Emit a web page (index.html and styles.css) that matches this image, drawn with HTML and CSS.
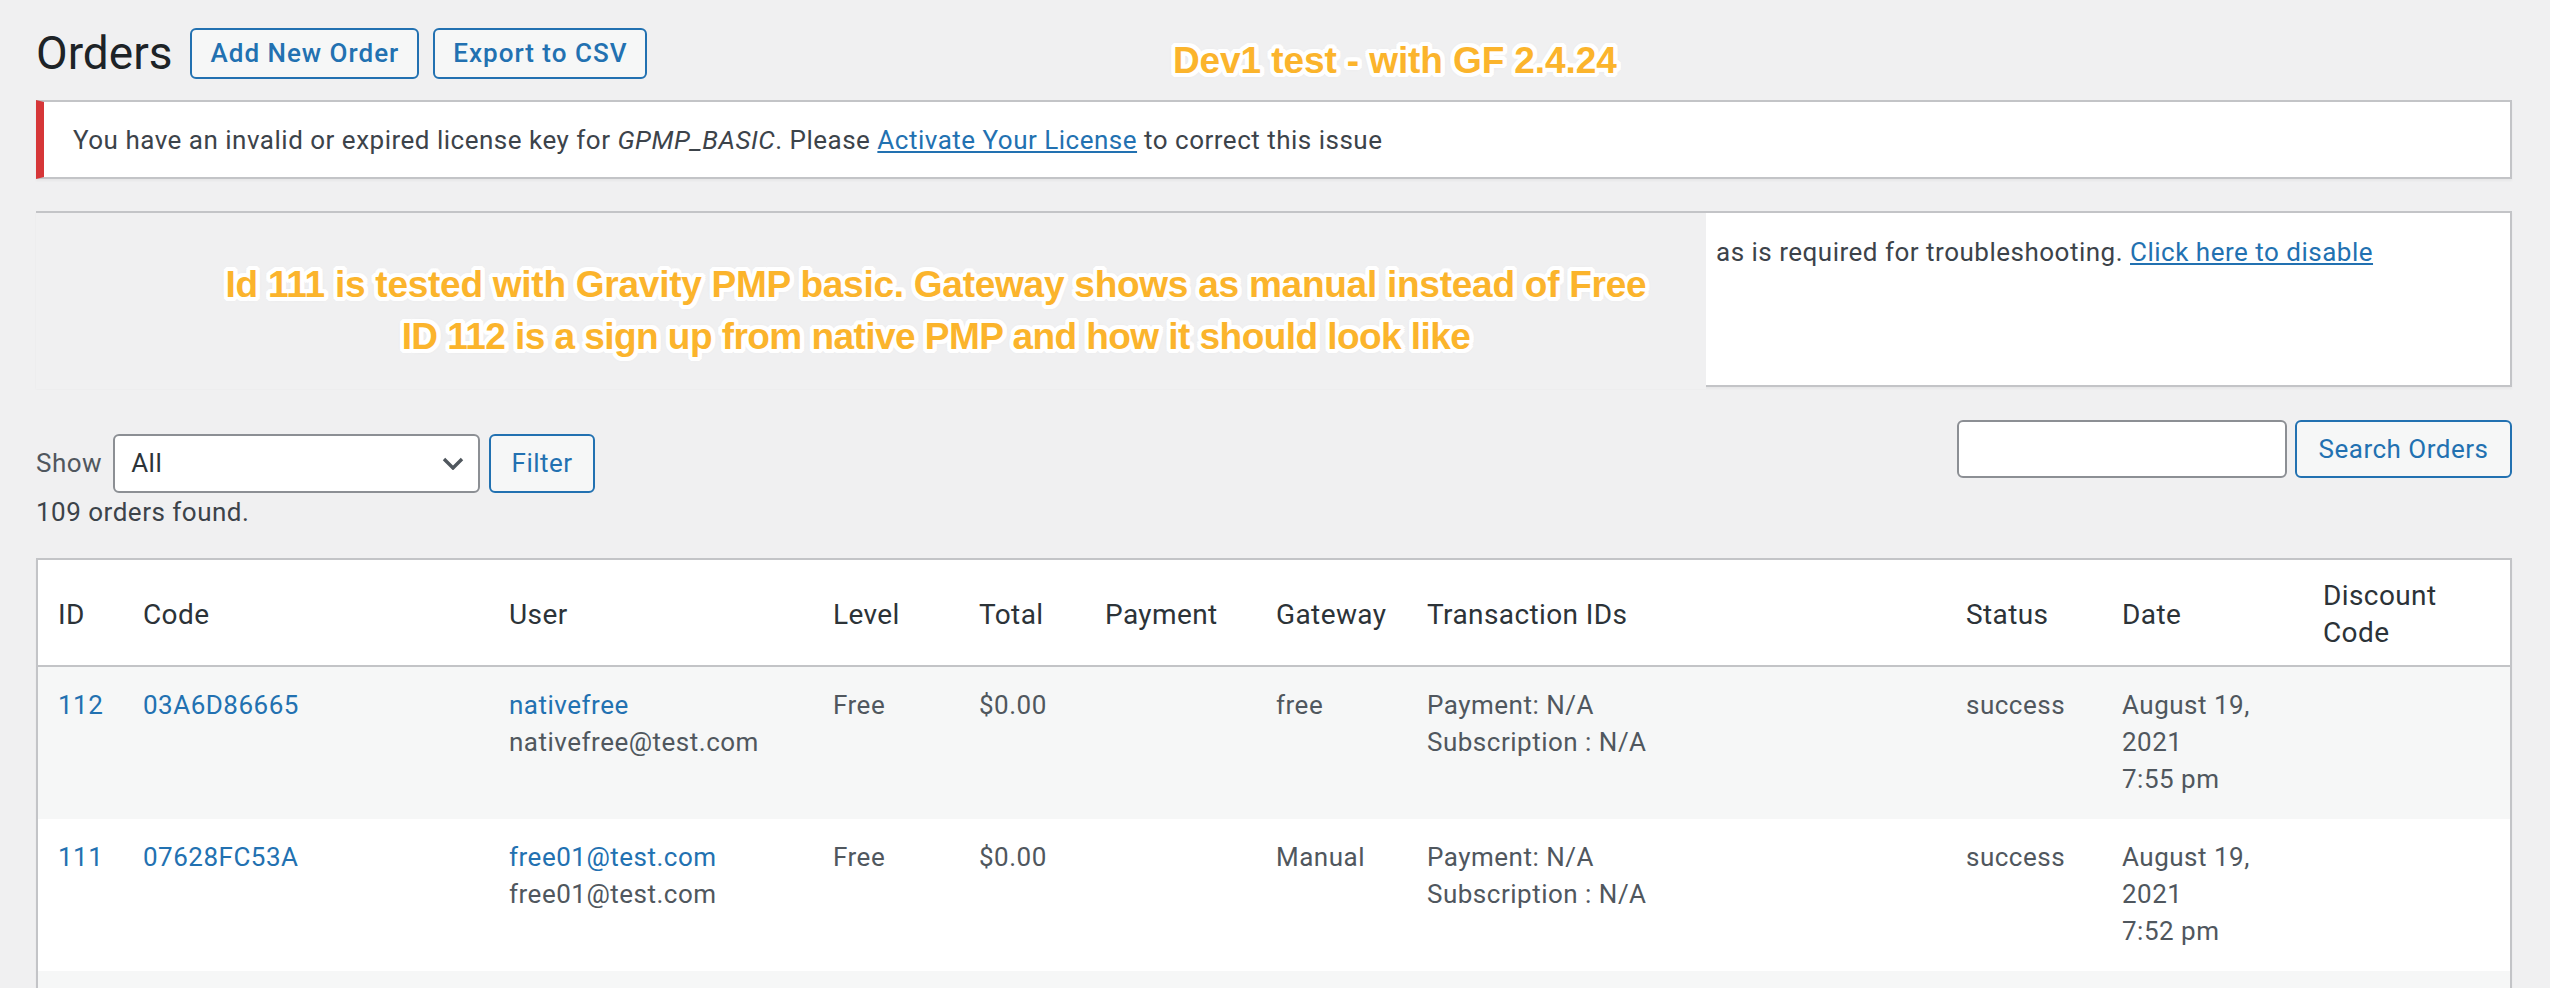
FILE: index.html
```html
<!DOCTYPE html>
<html lang="en">
<head>
<meta charset="utf-8">
<title>Orders</title>
<link rel="stylesheet" href="styles.css">
</head>
<body>
<div class="wrap">
  <div class="page-head">
    <h1 class="title">Orders</h1>
    <a class="title-btn" href="#">Add New Order</a>
    <a class="title-btn" href="#">Export to CSV</a>
    <p class="annot annot-dev">Dev1 test - with GF 2.4.24</p>
  </div>

  <div class="notice notice-error">
    <p>You have an invalid or expired license key for <em>GPMP_BASIC</em>. Please <a href="#">Activate Your License</a> to correct this issue</p>
  </div>

  <div class="notice notice-log">
    <p class="log-text">as is required for troubleshooting. <a href="#">Click here to disable</a></p>
    <div class="annot-patch">
      <p class="annot annot-l1">Id 111 is tested with Gravity PMP basic. Gateway shows as manual instead of Free</p>
      <p class="annot annot-l2">ID 112 is a sign up from native PMP and how it should look like</p>
    </div>
  </div>

  <div class="tablenav">
    <div class="filter">
      <div class="filter-row">
        <span class="show-label">Show</span>
        <div class="select">
          <span>All</span>
          <svg class="chev" width="22" height="13" viewBox="0 0 22 13"><path d="M2 2 L11 11 L20 2" fill="none" stroke="#50575e" stroke-width="3.4"/></svg>
        </div>
        <button class="btn btn-filter" type="button">Filter</button>
      </div>
      <p class="count">109 orders found.</p>
    </div>
    <div class="search">
      <div class="search-input"></div>
      <button class="btn btn-search" type="button">Search Orders</button>
    </div>
  </div>

  <table class="orders">
    <colgroup>
      <col class="c-id"><col class="c-code"><col class="c-user"><col class="c-level"><col class="c-total"><col class="c-pay"><col class="c-gw"><col class="c-tx"><col class="c-status"><col class="c-date"><col class="c-disc">
    </colgroup>
    <thead>
      <tr>
        <th>ID</th><th>Code</th><th>User</th><th>Level</th><th>Total</th><th>Payment</th><th>Gateway</th><th>Transaction IDs</th><th>Status</th><th>Date</th><th>Discount Code</th>
      </tr>
    </thead>
    <tbody>
      <tr>
        <td><a href="#">112</a></td>
        <td><a href="#">03A6D86665</a></td>
        <td><a href="#">nativefree</a><br>nativefree@test.com</td>
        <td>Free</td>
        <td>$0.00</td>
        <td></td>
        <td>free</td>
        <td>Payment: N/A<br>Subscription : N/A</td>
        <td>success</td>
        <td>August 19,<br>2021<br>7:55 pm</td>
        <td></td>
      </tr>
      <tr>
        <td><a href="#">111</a></td>
        <td><a href="#">07628FC53A</a></td>
        <td><a href="#">free01@test.com</a><br>free01@test.com</td>
        <td>Free</td>
        <td>$0.00</td>
        <td></td>
        <td>Manual</td>
        <td>Payment: N/A<br>Subscription : N/A</td>
        <td>success</td>
        <td>August 19,<br>2021<br>7:52 pm</td>
        <td></td>
      </tr>
      <tr class="row-empty">
        <td></td><td></td><td></td><td></td><td></td><td></td><td></td><td></td><td></td><td></td><td></td>
      </tr>
    </tbody>
  </table>
</div>
</body>
</html>
```
FILE: styles.css
```css
html, body {
  margin: 0;
  background: #f0f0f1;
}
body {
  font-family: Roboto, "Noto Sans", sans-serif;
  font-size: 26px;
  line-height: 37px;
  letter-spacing: 0.5px;
  color: #3c434a;
}
a {
  color: #2271b1;
  text-decoration: none;
}
.wrap {
  padding: 0 38px 0 36px;
}

/* header */
.page-head {
  position: relative;
  display: flex;
  align-items: center;
  padding-top: 28px;
}
.title {
  margin: 0 18px 0 0;
  font-size: 46px;
  font-weight: 400;
  line-height: 51px;
  letter-spacing: 0;
  color: #1d2327;
}
.title-btn {
  display: inline-flex;
  align-items: center;
  box-sizing: border-box;
  height: 51px;
  padding: 0 18px;
  margin-right: 14px;
  border: 2px solid #2271b1;
  border-radius: 6px;
  background: #f6f7f7;
  color: #2271b1;
  font-weight: 500;
  letter-spacing: 1px;
}

/* annotations */
.annot {
  margin: 0;
  white-space: nowrap;
  font-family: "Liberation Sans", Arial, sans-serif;
  font-weight: 700;
  font-size: 37px;
  line-height: 52px;
  letter-spacing: -0.1px;
  color: #fbb42c;
  text-shadow:
    4px 0 0 #fff, -4px 0 0 #fff, 0 4px 0 #fff, 0 -4px 0 #fff,
    3px 3px 0 #fff, -3px 3px 0 #fff, 3px -3px 0 #fff, -3px -3px 0 #fff,
    4px 2px 0 #fff, -4px 2px 0 #fff, 4px -2px 0 #fff, -4px -2px 0 #fff,
    2px 4px 0 #fff, -2px 4px 0 #fff, 2px -4px 0 #fff, -2px -4px 0 #fff,
    0 0 7px rgba(0, 0, 0, 0.12);
}
.annot-l1 {
  letter-spacing: -0.25px;
}
.annot-l2 {
  letter-spacing: -0.55px;
}
.annot-dev {
  position: absolute;
  left: 1137px;
  top: 35px;
}

/* notices */
.notice {
  background: #fff;
  border: 2px solid #c3c4c7;
  box-shadow: 0 2px 2px rgba(0, 0, 0, 0.04);
}
.notice a {
  text-decoration: underline;
}
.notice-error {
  margin-top: 21px;
  border-left: 8px solid #d63638;
}
.notice-error p {
  margin: 0;
  padding: 20px 29px 18px;
}
.notice-log {
  position: relative;
  margin-top: 32px;
  height: 172px;
}
.log-text {
  margin: 0;
  padding: 21px 0 0 1678px;
  white-space: nowrap;
}
.annot-patch {
  position: absolute;
  left: -2px;
  top: 0;
  box-sizing: border-box;
  width: 1670px;
  height: 176px;
  padding: 46px 0 0 130px;
  background: #f0f0f1;
  text-align: center;
}

/* toolbar */
.tablenav {
  display: flex;
  justify-content: space-between;
  align-items: flex-start;
  margin-top: 33px;
}
.filter {
  margin-top: 14px;
}
.filter-row {
  display: flex;
  align-items: center;
}
.show-label {
  color: #50575e;
  margin-right: 11px;
}
.select {
  box-sizing: border-box;
  width: 367px;
  height: 59px;
  display: flex;
  align-items: center;
  justify-content: space-between;
  padding: 0 14px 0 16px;
  border: 2px solid #8c8f94;
  border-radius: 6px;
  background: #fff;
  color: #2c3338;
}
.chev {
  display: block;
}
.btn {
  box-sizing: border-box;
  height: 59px;
  padding: 0;
  border: 2px solid #2271b1;
  border-radius: 6px;
  background: #f6f7f7;
  color: #2271b1;
  font-family: inherit;
  font-size: 26px;
  line-height: 37px;
  letter-spacing: 0.5px;
}
.btn-filter {
  margin-left: 9px;
  width: 106px;
}
.count {
  margin: 1px 0 0;
}
.search {
  display: flex;
  gap: 8px;
}
.search-input {
  box-sizing: border-box;
  width: 330px;
  height: 58px;
  border: 2px solid #8c8f94;
  border-radius: 6px;
  background: #fff;
}
.btn-search {
  width: 217px;
  height: 58px;
}

/* table */
.orders {
  width: 100%;
  margin-top: 27px;
  border: 2px solid #c3c4c7;
  border-spacing: 0;
  table-layout: fixed;
  background: #fff;
  box-shadow: 0 2px 2px rgba(0, 0, 0, 0.04);
}
.c-id { width: 85px; }
.c-code { width: 366px; }
.c-user { width: 324px; }
.c-level { width: 146px; }
.c-total { width: 126px; }
.c-pay { width: 171px; }
.c-gw { width: 151px; }
.c-tx { width: 539px; }
.c-status { width: 156px; }
.c-date { width: 201px; }
.c-disc { width: 207px; }
.orders th {
  text-align: left;
  font-weight: 400;
  font-size: 28px;
  letter-spacing: 0.4px;
  color: #2c3338;
  padding: 17px 20px 14px;
  border-bottom: 2px solid #c3c4c7;
  vertical-align: middle;
}
.orders td {
  padding: 20px 20px 21px;
  vertical-align: top;
  color: #50575e;
}
.orders tbody tr:nth-child(odd) {
  background: #f6f7f7;
}
.row-empty td {
  height: 111px;
}
```
